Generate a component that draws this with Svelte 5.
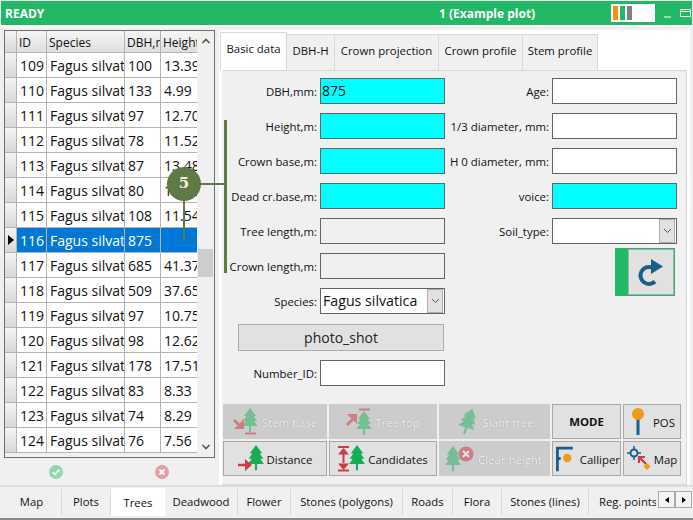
<script>
	const rows = [
		[109, "100", "13.39"], [110, "133", "4.99"], [111, "97", "12.70"], [112, "78", "11.52"],
		[113, "87", "13.48"], [114, "80", "10.22"], [115, "108", "11.54"], [116, "875", ""],
		[117, "685", "41.37"], [118, "509", "37.65"], [119, "97", "10.75"], [120, "98", "12.62"],
		[121, "178", "17.51"], [122, "83", "8.33"], [123, "74", "8.29"], [124, "76", "7.56"]
	];
	const leftFields = [
		{ label: "DBH,mm:", value: "875", kind: "req" },
		{ label: "Height,m:", kind: "req" },
		{ label: "Crown base,m:", kind: "req" },
		{ label: "Dead cr.base,m:", kind: "req" },
		{ label: "Tree length,m:", kind: "off" },
		{ label: "Crown length,m:", kind: "off" }
	];
	const rightFields = [
		{ label: "Age:", kind: "" },
		{ label: "1/3 diameter, mm:", kind: "" },
		{ label: "H 0 diameter, mm:", kind: "" },
		{ label: "voice:", kind: "req" }
	];
	const topTabs = ["Basic data", "DBH-H", "Crown projection", "Crown profile", "Stem profile"];
	const bottomTabs = [
		["Map", 60], ["Plots", 49], ["Trees", 54], ["Deadwood", 73], ["Flower", 53],
		["Stones (polygons)", 112], ["Roads", 50], ["Flora", 49], ["Stones (lines)", 87], ["Reg. points", 67]
	];
</script>

{#snippet tree(x, y, s, fill)}
	<path d="M{x} {y}l{-6 * s} {8 * s}h{2.5 * s}l{-3.5 * s} {5 * s}h{3 * s}l{-3.5 * s} {5 * s}h{6.5 * s}v{6 * s}h{2 * s}v{-6 * s}h{6.5 * s}l{-3.5 * s} {-5 * s}h{3 * s}l{-3.5 * s} {-5 * s}h{2.5 * s}z" fill={fill} />
{/snippet}

<div class="window">
	<header class="title">
		<span class="ready">READY</span>
		<span class="plot">1 (Example plot)</span>
		<div class="legend"><i class="orange"></i><i class="green"></i><i class="grey"></i></div>
		<svg class="winbtns" width="30" height="14" viewBox="0 0 30 14">
			<path d="M1 11h7" stroke="#fff" stroke-width="1" />
			<path d="M17.5 3.5h10v7h-10zM17.5 5.5h10" stroke="#fff" fill="none" />
		</svg>
	</header>

	<div class="main">
		<section class="left">
			<div class="grid-box">
				<div class="table">
					<div class="tr head">
						<div class="rh"></div>
						<div class="c id">ID</div>
						<div class="c sp">Species</div>
						<div class="c dbh">DBH,mm</div>
						<div class="c ht">Height,m</div>
					</div>
					{#each rows as r}
						<div class="tr" class:sel={r[0] === 116}>
							<div class="rh">{#if r[0] === 116}<span class="caret"></span>{/if}</div>
							<div class="c id">{r[0]}</div>
							<div class="c sp">Fagus silvatica</div>
							<div class="c dbh">{r[1]}</div>
							<div class="c ht">{r[2]}</div>
						</div>
					{/each}
				</div>
				<div class="vscroll">
					<svg width="10" height="8" viewBox="0 0 10 8"><path d="M1.5 6L5 2.5 8.5 6" fill="none" stroke="#555" stroke-width="1.6" /></svg>
					<div class="thumb"></div>
					<svg width="10" height="8" viewBox="0 0 10 8"><path d="M1.5 2L5 5.5 8.5 2" fill="none" stroke="#555" stroke-width="1.6" /></svg>
				</div>
			</div>
			<div class="confirm">
				<svg width="14" height="14" viewBox="0 0 14 14"><circle cx="7" cy="7" r="7" fill="#92d6ae" /><path d="M3.8 7.2l2.3 2.2 4.2-4.6" fill="none" stroke="#fff" stroke-width="1.8" /></svg>
				<svg width="14" height="14" viewBox="0 0 14 14"><circle cx="7" cy="7" r="7" fill="#e2a0a6" /><path d="M4.5 4.5l5 5M9.5 4.5l-5 5" stroke="#fff" stroke-width="1.8" /></svg>
			</div>
		</section>

		<section class="right">
			<nav class="toptabs">
				{#each topTabs as t, i}
					<div class="toptab" class:active={i === 0}>{t}</div>
				{/each}
			</nav>
			<div class="panel">
				<div class="form">
					<div class="col col-l">
						{#each leftFields as f}
							<div class="field">
								<label>{f.label}</label>
								<div class="input {f.kind}">{f.value ?? ""}</div>
							</div>
						{/each}
						<div class="field">
							<label>Species:</label>
							<div class="input combo big">
								<span>Fagus silvatica</span>
								<div class="drop"><svg width="9" height="6" viewBox="0 0 9 6"><path d="M1 1l3.5 3.5L8 1" fill="none" stroke="#555" /></svg></div>
							</div>
						</div>
						<button class="photo">photo_shot</button>
						<div class="field">
							<label>Number_ID:</label>
							<div class="input"></div>
						</div>
					</div>
					<div class="col col-r">
						{#each rightFields as f}
							<div class="field">
								<label>{f.label}</label>
								<div class="input {f.kind}"></div>
							</div>
						{/each}
						<div class="field">
							<label>Soil_type:</label>
							<div class="input combo">
								<span></span>
								<div class="drop"><svg width="9" height="6" viewBox="0 0 9 6"><path d="M1 1l3.5 3.5L8 1" fill="none" stroke="#555" /></svg></div>
							</div>
						</div>
						<div class="next">
							<div class="next-inner">
								<svg width="26" height="28" viewBox="0 0 26 28">
									<path d="M14 9.5A8.5 8.5 0 1 0 17 23.5" fill="none" stroke="#1b5e8c" stroke-width="4" />
									<path d="M13 1l12 7.5-12 7.5z" fill="#1b5e8c" />
								</svg>
							</div>
						</div>
					</div>
				</div>

				<div class="tools">
					<button class="tool off">
						<svg width="26" height="27" viewBox="0 0 26 27">
							{@render tree(17, 0, 1, "#23b45f")}
							<path d="M12 25.5h11" stroke="#c9343f" stroke-width="2" />
							<path d="M1 12l7 7" stroke="#c9343f" stroke-width="3" />
							<path d="M11 11v10H1z" fill="#c9343f" />
						</svg>
						<span>Stem base</span>
					</button>
					<button class="tool off">
						<svg width="26" height="27" viewBox="0 0 26 27">
							{@render tree(18, 3, 1, "#23b45f")}
							<path d="M13 1.5h11" stroke="#c9343f" stroke-width="2" />
							<path d="M1 17l7-7" stroke="#c9343f" stroke-width="3" />
							<path d="M1 6h10v10z" fill="#c9343f" />
						</svg>
						<span>Tree top</span>
					</button>
					<button class="tool off">
						<svg width="24" height="27" viewBox="0 0 24 27">
							<g transform="rotate(18 12 14)">{@render tree(12, 0, 1.1, "#23b45f")}</g>
						</svg>
						<span>Slant tree</span>
					</button>
					<button class="tool mode">MODE</button>
					<button class="tool pos">
						<svg width="14" height="27" viewBox="0 0 14 27">
							<path d="M7 10v17" stroke="#1b5e8c" stroke-width="3" />
							<circle cx="7" cy="6" r="6" fill="#ef9a1a" />
						</svg>
						<span>POS</span>
					</button>

					<button class="tool">
						<svg width="26" height="27" viewBox="0 0 26 27">
							{@render tree(18, 0, 1.05, "#17ad57")}
							<path d="M0 20h8" stroke="#cf3a44" stroke-width="2.5" />
							<path d="M7 14l7 6-7 6z" fill="#cf3a44" />
						</svg>
						<span>Distance</span>
					</button>
					<button class="tool">
						<svg width="27" height="27" viewBox="0 0 27 27">
							{@render tree(19, 0, 1.05, "#17ad57")}
							<path d="M0 2h11M0 25.5h11" stroke="#cf3a44" stroke-width="2.2" />
							<path d="M5.5 3l5.5 6.5H0zM5.500 25L11 18.5H0zM4.5 9h2v10h-2z" fill="#cf3a44" />
						</svg>
						<span>Candidates</span>
					</button>
					<button class="tool off clear">
						<svg width="32" height="27" viewBox="0 0 32 27">
							{@render tree(9, 1, 1.05, "#23b45f")}
							<circle cx="22" cy="9" r="7.5" fill="#c9343f" />
							<path d="M19 6l6 6M25 6l-6 6" stroke="#fff" stroke-width="1.8" />
						</svg>
						<span>Clear height</span>
					</button>
					<button class="tool call">
						<svg width="18" height="27" viewBox="0 0 18 27">
							<path d="M1.5 27V2.5H18M1.5 13.5H5" fill="none" stroke="#1b5e8c" stroke-width="3" />
							<circle cx="12" cy="13" r="4.5" fill="#ef9a1a" />
						</svg>
						<span>Calliper</span>
					</button>
					<button class="tool map">
						<svg width="24" height="27" viewBox="0 0 24 27">
							<circle cx="7" cy="8" r="3.5" fill="none" stroke="#1b5e8c" stroke-width="2" />
							<path d="M7 1v3M7 12v3M0 8h3M11 8h3" stroke="#1b5e8c" stroke-width="1.5" />
							<path d="M12 12l7 7M12 18v-6h6" fill="none" stroke="#cf3a44" stroke-width="2.2" />
							<path d="M20 18l3.5 3.5L20 25l-3.5-3.5z" fill="#ef9a1a" />
						</svg>
						<span>Map</span>
					</button>
				</div>
			</div>
		</section>
	</div>

	<footer class="bottom">
		{#each bottomTabs as t}
			<div class="btab" class:active={t[0] === "Trees"} style="width: {t[1]}px">{t[0]}</div>
		{/each}
		<div class="arrows">
			<div><span class="tri l"></span></div>
			<div><span class="tri r"></span></div>
		</div>
	</footer>

	<!-- annotation laid over the screenshot -->
	<div class="bracket"></div>
	<div class="badge-arm"></div>
	<div class="badge-stem"></div>
	<div class="badge">5</div>
</div>

<style>
	:global(body) {
		background: #fff;
	}
	.window {
		position: relative;
		width: 693px;
		height: 520px;
		overflow: hidden;
		background: #f0f0f0;
		font-family: "Open Sans", "Noto Sans", sans-serif;
		font-size: 11.4px;
		color: #111;
		box-sizing: border-box;
		border-bottom: 2px solid #8a8a8a;
	}
	.title {
		margin: 1px 1px 0;
		height: 24px;
		background: #22b966;
		color: #fff;
		font-weight: 700;
		display: flex;
		align-items: center;
		padding-left: 4px;
		border-bottom: 2px solid #fff;
		box-sizing: content-box;
	}
	.title > * {
		flex: none;
	}
	.ready {
		font-size: 12px;
		width: 434px;
	}
	.plot {
		font-size: 12px;
		width: 172px;
	}
	.legend {
		width: 44px;
		height: 18px;
		background: #fff;
		display: flex;
		gap: 2px;
		box-sizing: border-box;
		padding: 2px 2px;
	}
	.legend i {
		display: block;
		width: 5px;
		height: 14px;
	}
	.orange { background: #ff8c14; }
	.green { background: #22b966; }
	.grey { background: #808080; }
	.winbtns {
		margin-left: 8px;
	}
	.main {
		display: flex;
		height: 460px;
		padding-left: 4px;
		padding-top: 3px;
		gap: 4px;
		border-bottom: 2px solid #dcdcdc;
		box-sizing: border-box;
	}
	.left {
		width: 211px;
		flex: none;
	}
	.grid-box {
		display: flex;
		height: 428px;
		box-sizing: border-box;
		border: 1px solid #6e6e6e;
		background: #f0f0f0;
	}
	.table {
		width: 192px;
		font-size: 14px;
	}
	.tr {
		display: flex;
		height: 25px;
		background: #fff;
		border-bottom: 1px solid #b4b4b4;
		box-sizing: border-box;
	}
	.tr.head {
		height: 22px;
		font-size: 12px;
		background: linear-gradient(#f6f6f6, #dedede);
	}
	.rh {
		width: 12px;
		flex: none;
		box-sizing: border-box;
		border-right: 1px solid #b4b4b4;
		background: linear-gradient(#f4f4f4, #d8d8d8);
		display: flex;
		align-items: center;
		justify-content: center;
	}
	.caret {
		border-left: 6px solid #000;
		border-top: 5px solid transparent;
		border-bottom: 5px solid transparent;
	}
	.c {
		box-sizing: border-box;
		border-right: 1px solid #b4b4b4;
		padding-left: 3px;
		white-space: nowrap;
		overflow: hidden;
		line-height: 26px;
	}
	.head .c {
		line-height: 23px;
		padding-left: 2px;
	}
	.id { width: 30px; }
	.sp { width: 78px; }
	.dbh { width: 36px; }
	.ht { width: 36px; border-right: 0; }
	.tr.sel {
		background: #0078d7;
		color: #fff;
	}
	.vscroll {
		flex: 1;
		display: flex;
		flex-direction: column;
		align-items: center;
		justify-content: space-between;
		position: relative;
		padding: 6px 0;
		box-sizing: border-box;
	}
	.thumb {
		position: absolute;
		top: 218px;
		left: 1px;
		width: 15px;
		height: 28px;
		background: #cdcdcd;
	}
	.confirm {
		display: flex;
		justify-content: space-between;
		padding: 7px 46px 0 45px;
	}
	.right {
		flex: 1;
		margin-right: 3px;
		padding-top: 2px;
		display: flex;
		flex-direction: column;
		background: #fff;
		box-sizing: border-box;
		min-width: 0;
	}
	.toptabs {
		display: flex;
		align-items: flex-end;
		height: 38px;
		padding-left: 1px;
	}
	.toptab {
		height: 36px;
		line-height: 32px;
		background: #f0f0f0;
		border: 1px solid #d9d9d9;
		border-left: 0;
		border-bottom: 0;
		box-sizing: border-box;
		white-space: nowrap;
		text-align: center;
	}
	.toptab.active {
		height: 38px;
		line-height: 31px;
		background: #fff;
		width: 67px;
		border-left: 1px solid #d9d9d9;
	}
	.toptab:nth-child(2) { width: 48px; }
	.toptab:nth-child(3) { width: 104px; }
	.toptab:nth-child(4) { width: 84px; }
	.toptab:nth-child(5) { width: 75px; }
	.panel {
		flex: 1;
		margin: 0 3px;
		border: 1px solid #d9d9d9;
		border-left: 0;
		background: #f0f0f0;
		padding-top: 7px;
		box-sizing: border-box;
		display: flex;
		flex-direction: column;
	}
	.form {
		display: flex;
		height: 320px;
	}
	.col {
		display: flex;
		flex-direction: column;
		gap: 9px;
		align-items: flex-end;
	}
	.col-l { width: 223px; }
	.col-r { width: 232px; }
	.field {
		display: flex;
		align-items: center;
		justify-content: flex-end;
		gap: 3px;
		height: 26px;
		white-space: nowrap;
	}
	.input {
		width: 125px;
		height: 26px;
		box-sizing: border-box;
		border: 1px solid #646464;
		background: #fff;
		font-size: 14px;
		line-height: 24px;
		padding-left: 1px;
	}
	.input.req { background: #00ffff; }
	.input.off { background: #f0f0f0; }
	.combo {
		display: flex;
		justify-content: space-between;
		padding: 0 1px 0 2px;
	}
	.big span { font-size: 14.2px; }
	.drop {
		width: 16px;
		height: 24px;
		background: #e1e1e1;
		border: 1px solid #adadad;
		box-sizing: border-box;
		display: flex;
		align-items: center;
		justify-content: center;
	}
	.photo {
		width: 206px;
		height: 27px;
		margin: 1px 1px 0 0;
		background: #e1e1e1;
		border: 1px solid #adadad;
		font: 14px "Open Sans", sans-serif;
		color: #222;
		padding: 0;
	}
	.next {
		width: 60px;
		height: 48px;
		margin: -5px 2px 0 0;
		background: #22b966;
		padding: 1px 1px 1px 13px;
		box-sizing: border-box;
	}
	.next-inner {
		height: 100%;
		background: #e1e1e1;
		border: 1px solid #adadad;
		box-sizing: border-box;
		display: flex;
		align-items: center;
		justify-content: center;
	}
	.tools {
		margin: 6px 0 0 1px;
		display: grid;
		grid-template-columns: 104px 108px 111px 69px 58px;
		grid-auto-rows: 35px;
		gap: 2px;
		width: 458px;
	}
	.tool {
		display: flex;
		align-items: center;
		justify-content: center;
		gap: 3px;
		padding: 0;
		background: #e1e1e1;
		border: 1px solid #a8a8a8;
		font: 11.4px "Open Sans", sans-serif;
		color: #111;
		overflow: hidden;
		white-space: nowrap;
	}
	.tool span {
		padding-top: 2px;
	}
	.tool.off {
		background: #cccccc;
		border-color: #cccccc;
		color: #f4f4f4;
		text-shadow: 0 0 1px #888;
	}
	.tool.off svg {
		opacity: 0.5;
	}
	.tool.mode {
		font-weight: 700;
	}
	.pos {
		gap: 8px;
		padding-left: 2px;
	}
	.call {
		justify-content: flex-start;
		padding-left: 3px;
		gap: 7px;
	}
	.map {
		gap: 3px;
	}
	.clear {
		justify-content: flex-start;
		padding-left: 4px;
		gap: 2px;
	}
	.bottom {
		display: flex;
		height: 30px;
		padding: 2px 0 0 2px;
		box-sizing: border-box;
		position: relative;
		overflow: hidden;
		font-size: 11.3px;
	}
	.btab {
		flex: none;
		box-sizing: border-box;
		border-right: 1px solid #d9d9d9;
		height: 26px;
		line-height: 25px;
		text-align: center;
		white-space: nowrap;
		overflow: hidden;
	}
	.btab:nth-child(10) {
		border-right: 0;
		text-align: left;
		padding-left: 10px;
	}
	.btab.active {
		background: #fff;
		height: 28px;
		line-height: 30px;
		margin-top: -1px;
		border: 0;
	}
	.arrows {
		position: absolute;
		right: 1px;
		top: 4px;
		display: flex;
		background: #f0f0f0;
	}
	.arrows div {
		width: 17px;
		height: 17px;
		box-sizing: border-box;
		border: 1px solid #a8a8a8;
		background: #f4f4f4;
		display: flex;
		align-items: center;
		justify-content: center;
	}
	.tri {
		border-top: 3px solid transparent;
		border-bottom: 3px solid transparent;
	}
	.tri.l { border-right: 4px solid #000; }
	.tri.r { border-left: 4px solid #000; }
	.bracket {
		position: absolute;
		left: 224px;
		top: 120px;
		width: 3px;
		height: 153px;
		background: #5f7a46;
	}
	.badge-arm {
		position: absolute;
		left: 198px;
		top: 183px;
		width: 26px;
		height: 2px;
		background: #5f7a46;
	}
	.badge {
		position: absolute;
		left: 167px;
		top: 167px;
		width: 34px;
		height: 34px;
		border-radius: 50%;
		background: #5f7a46;
		color: #f5efdc;
		font: 700 15px/33px "DejaVu Serif", serif;
		text-align: center;
	}
	.badge-stem {
		position: absolute;
		left: 183px;
		top: 198px;
		width: 2px;
		height: 43px;
		background: #5f7a46;
	}
</style>
